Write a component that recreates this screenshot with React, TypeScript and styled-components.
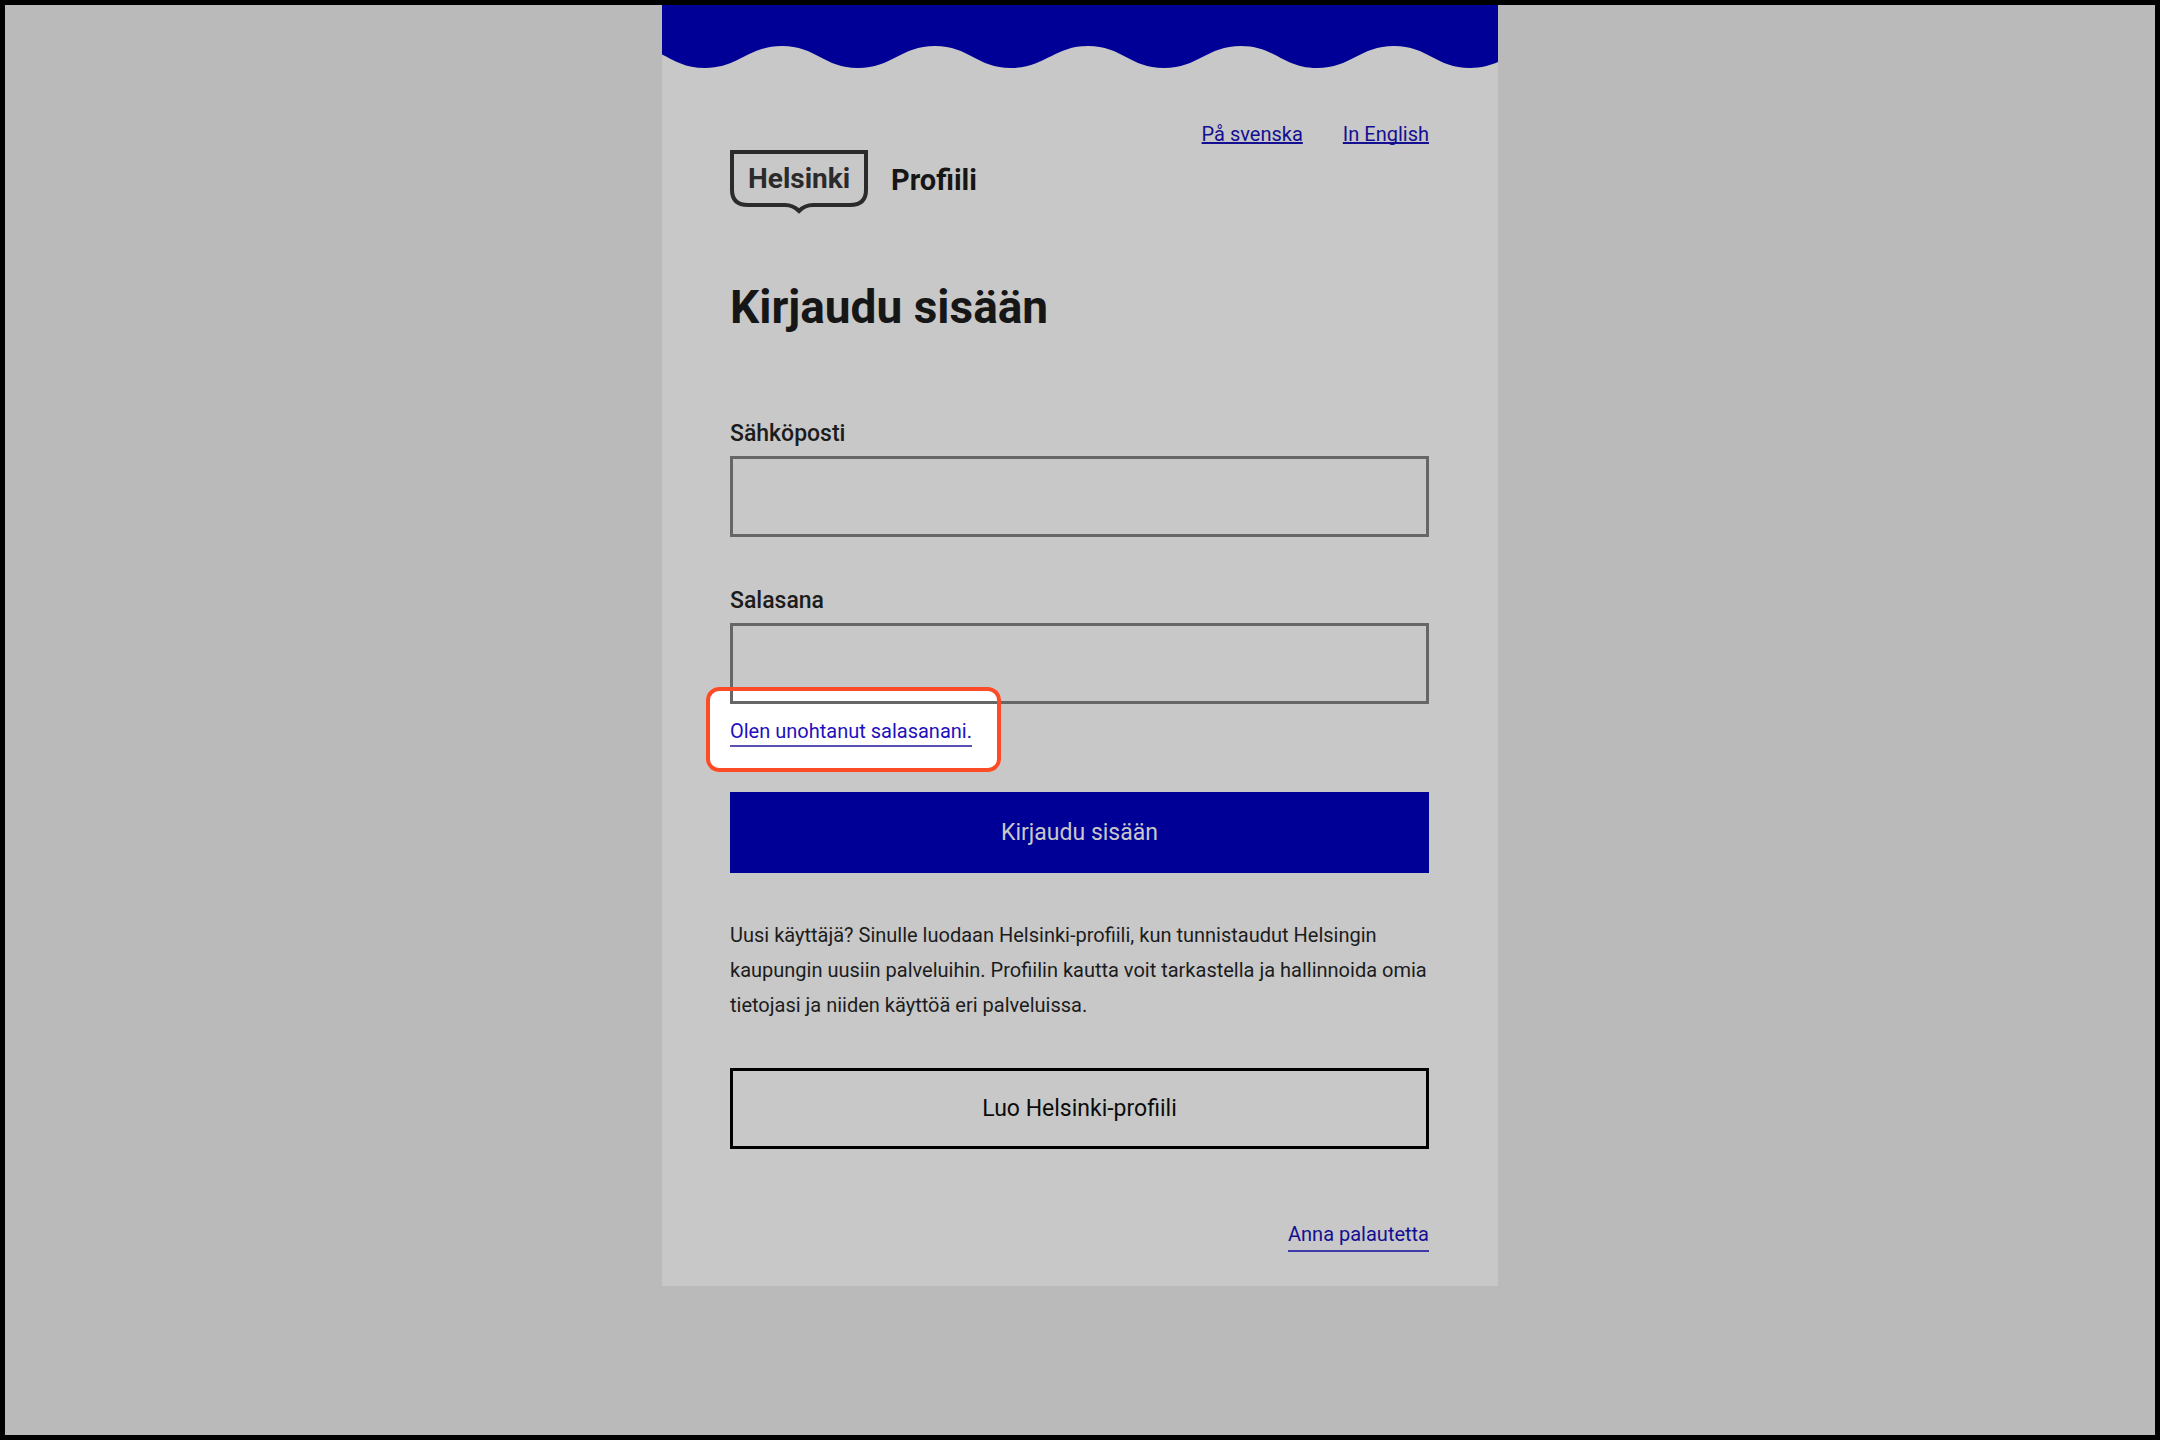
import React from "react";
import styled, { createGlobalStyle } from "styled-components";

const color = {
  page: "#bababa",
  card: "#c8c8c8",
  blue: "#000097",
  link: "#140f92",
  text: "#161616",
  body: "#1c1c1c",
  logo: "#2b2b2b",
  field: "#666666",
  mark: "#fb4b27",
};

const GlobalStyle = createGlobalStyle`
  * { box-sizing: border-box; }
  body {
    margin: 0;
    background: ${color.page};
    color: ${color.text};
    font-family: Roboto, "Liberation Sans", sans-serif;
    font-size: 20px;
  }
`;

const Page = styled.div`
  display: flex;
  justify-content: center;
  align-items: flex-start;
  min-height: 100vh;
  border: 5px solid #000;
`;

const Card = styled.main`
  width: 100%;
  max-width: 836px;
  background: ${color.card};
`;

const Wave = styled.svg`
  display: block;
  width: 100%;
  height: 63px;
  fill: ${color.blue};
`;

const Content = styled.div`
  display: flex;
  flex-direction: column;
  padding: 54px 69px 34px 68px;
`;

const Languages = styled.nav`
  display: flex;
  justify-content: flex-end;
  gap: 40px;
  margin-bottom: 4px;
`;

const LanguageLink = styled.a`
  color: ${color.link};
  line-height: 24px;
  text-decoration: underline;
  text-decoration-skip-ink: none;
`;

const Brand = styled.div`
  display: flex;
  align-items: flex-start;
  gap: 23px;
`;

const Logo = styled.svg`
  width: 138px;
  height: 64px;
  fill: none;
  stroke: ${color.logo};
  stroke-width: 4;

  text {
    fill: ${color.logo};
    stroke: none;
    font-size: 28px;
    font-weight: 700;
  }
`;

const Service = styled.span`
  font-size: 29px;
  font-weight: 700;
  line-height: 60px;
`;

const Title = styled.h1`
  margin: 65px 0 85px;
  font-size: 46px;
  font-weight: 700;
  line-height: 56px;
`;

const Form = styled.form`
  display: flex;
  flex-direction: column;
`;

const Field = styled.div`
  display: flex;
  flex-direction: column;
  gap: 8px;

  & + & {
    margin-top: 50px;
  }
`;

const Label = styled.label`
  color: ${color.body};
  font-size: 23px;
  font-weight: 500;
  line-height: 28px;
`;

const Input = styled.input`
  position: relative;
  z-index: 1;
  width: 100%;
  height: 81px;
  padding: 0 20px;
  border: 3px solid ${color.field};
  border-radius: 0;
  background: transparent;
  font: inherit;
`;

const Highlight = styled.div`
  position: relative;
  align-self: flex-start;
  margin: 13px 0 45px;

  &::before,
  &::after {
    content: "";
    position: absolute;
    inset: -30px -29px -25px -24px;
    border-radius: 13px;
    pointer-events: none;
  }

  &::before {
    background: #fff;
  }

  &::after {
    z-index: 2;
    border: 4px solid ${color.mark};
  }
`;

const RuledLink = styled.a<{ $line: number; $dim?: boolean }>`
  position: relative;
  display: block;
  border-bottom: 2px solid ${(p) => (p.$dim ? "#4039a8" : "#5a4fb4")};
  color: ${(p) => (p.$dim ? color.link : "#1f0fbe")};
  line-height: ${(p) => p.$line}px;
  text-decoration: none;
`;

const Button = styled.button<{ $outline?: boolean }>`
  width: 100%;
  height: 81px;
  border: 3px solid ${(p) => (p.$outline ? "#000" : color.blue)};
  border-radius: 0;
  background: ${(p) => (p.$outline ? "transparent" : color.blue)};
  color: ${(p) => (p.$outline ? "#0c0c0c" : color.card)};
  font-family: inherit;
  font-size: 23px;
  font-weight: 400;
  cursor: pointer;
`;

const Intro = styled.p`
  margin: 45px 0;
  color: ${color.body};
  line-height: 35px;
`;

const Feedback = styled.footer`
  display: flex;
  justify-content: flex-end;
  margin-top: 69px;
`;

const crests = "c34 0 43 -22 77 -22s42 22 76 22".repeat(7);

export default function App() {
  return (
    <>
      <GlobalStyle />
      <Page>
        <Card>
          <Wave viewBox="0 0 836 63" preserveAspectRatio="xMinYMin slice" aria-hidden="true">
            <path d={`M-110 0V63${crests}V0z`} />
          </Wave>
          <Content>
            <Languages aria-label="Kieli">
              <LanguageLink href="#sv" lang="sv">På svenska</LanguageLink>
              <LanguageLink href="#en" lang="en">In English</LanguageLink>
            </Languages>
            <Brand>
              <Logo viewBox="0 0 138 64" role="img" aria-label="Helsinki">
                <path d="M2 2H136V40Q136 55 120 55H83Q75 55 69 61Q63 55 55 55H18Q2 55 2 40Z" />
                <text x="18" y="38">Helsinki</text>
              </Logo>
              <Service>Profiili</Service>
            </Brand>
            <Title>Kirjaudu sisään</Title>
            <Form onSubmit={(e) => e.preventDefault()}>
              <Field>
                <Label htmlFor="email">Sähköposti</Label>
                <Input id="email" type="email" />
              </Field>
              <Field>
                <Label htmlFor="password">Salasana</Label>
                <Input id="password" type="password" />
              </Field>
              <Highlight>
                <RuledLink href="#reset" $line={28}>Olen unohtanut salasanani.</RuledLink>
              </Highlight>
              <Button type="submit">Kirjaudu sisään</Button>
            </Form>
            <Intro>
              Uusi käyttäjä? Sinulle luodaan Helsinki-profiili, kun tunnistaudut Helsingin
              kaupungin uusiin palveluihin. Profiilin kautta voit tarkastella ja hallinnoida
              omia tietojasi ja niiden käyttöä eri palveluissa.
            </Intro>
            <Button type="button" $outline>Luo Helsinki-profiili</Button>
            <Feedback>
              <RuledLink href="#feedback" $line={32} $dim>Anna palautetta</RuledLink>
            </Feedback>
          </Content>
        </Card>
      </Page>
    </>
  );
}
